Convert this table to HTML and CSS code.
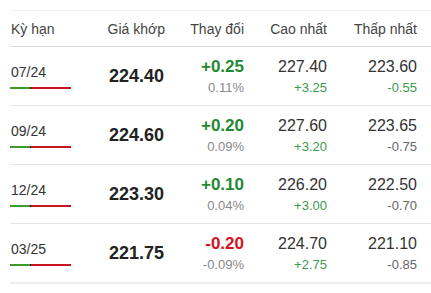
FILE: index.html
```html
<!DOCTYPE html>
<html lang="vi">
<head>
<meta charset="utf-8">
<title>Bảng giá</title>
<link rel="stylesheet" href="styles.css">
</head>
<body>
<div class="wrap">
  <div class="table">
    <div class="row head">
      <div class="c c1">Kỳ hạn</div>
      <div class="c c2">Giá khớp</div>
      <div class="c c3">Thay đổi</div>
      <div class="c c4">Cao nhất</div>
      <div class="c c5">Thấp nhất</div>
    </div>
    <div class="row">
      <div class="c c1"><span class="term">07/24</span><span class="bar"><i class="g" style="width:20px"></i><i class="k"></i><i class="r"></i></span></div>
      <div class="c c2 price">224.40</div>
      <div class="c c3 stack"><span class="big up">+0.25</span><span class="small muted">0.11%</span></div>
      <div class="c c4 stack"><span class="val">227.40</span><span class="small up2">+3.25</span></div>
      <div class="c c5 stack"><span class="val">223.60</span><span class="small up2">-0.55</span></div>
    </div>
    <div class="row">
      <div class="c c1"><span class="term">09/24</span><span class="bar"><i class="g" style="width:20px"></i><i class="k"></i><i class="r"></i></span></div>
      <div class="c c2 price">224.60</div>
      <div class="c c3 stack"><span class="big up">+0.20</span><span class="small muted">0.09%</span></div>
      <div class="c c4 stack"><span class="val">227.60</span><span class="small up2">+3.20</span></div>
      <div class="c c5 stack"><span class="val">223.65</span><span class="small neutral">-0.75</span></div>
    </div>
    <div class="row">
      <div class="c c1"><span class="term">12/24</span><span class="bar"><i class="g" style="width:20px"></i><i class="k"></i><i class="r"></i></span></div>
      <div class="c c2 price">223.30</div>
      <div class="c c3 stack"><span class="big up">+0.10</span><span class="small muted">0.04%</span></div>
      <div class="c c4 stack"><span class="val">226.20</span><span class="small up2">+3.00</span></div>
      <div class="c c5 stack"><span class="val">222.50</span><span class="small neutral">-0.70</span></div>
    </div>
    <div class="row last">
      <div class="c c1"><span class="term">03/25</span><span class="bar"><i class="g" style="width:20px"></i><i class="k"></i><i class="r"></i></span></div>
      <div class="c c2 price">221.75</div>
      <div class="c c3 stack"><span class="big down">-0.20</span><span class="small muted">-0.09%</span></div>
      <div class="c c4 stack"><span class="val">224.70</span><span class="small up2">+2.75</span></div>
      <div class="c c5 stack"><span class="val">221.10</span><span class="small neutral">-0.85</span></div>
    </div>
  </div>
</div>
</body>
</html>
```
FILE: styles.css
```css
html, body {
  margin: 0;
  padding: 0;
  background: #ffffff;
}
body {
  font-family: "Liberation Sans", Arial, sans-serif;
  color: #333;
}
.wrap {
  padding: 10px 0 0 10px;
}
.table {
  border-top: 1px solid #f0f0f0;
}
.row {
  display: grid;
  grid-template-columns: 80px 75px 79px 83px 90px;
  padding-right: 14px;
  height: 58px;
  border-bottom: 1px solid #e6e6e6;
  align-items: center;
}
.row.head {
  height: 35px;
  border-bottom: 1px solid #dcdcdc;
  font-size: 14px;
  color: #444;
}
.row.last {
  border-bottom: 2px solid #eeeeee;
}
.c {
  text-align: right;
  white-space: nowrap;
}
.c1 {
  text-align: left;
  padding-left: 1px;
}
.row:not(.head) .c1 {
  display: flex;
  flex-direction: column;
  align-items: flex-start;
  padding-left: 0;
}
.term {
  font-size: 14px;
  line-height: 16px;
  color: #333;
  padding-left: 1px;
}
.bar {
  display: flex;
  width: 61px;
  height: 2px;
  margin-top: 7px;
}
.bar i {
  display: block;
  height: 2px;
}
.bar .g { background: #3f9a2b; }
.bar .k { width: 1px; background: #1a1a1a; }
.bar .r { flex: 1; background: #c8141e; }
.price {
  font-size: 18px;
  font-weight: bold;
  color: #222;
  padding-right: 1px;
}
.stack {
  display: flex;
  flex-direction: column;
  align-items: flex-end;
}
.big {
  font-size: 17px;
  line-height: 20px;
  font-weight: bold;
}
.val {
  font-size: 16px;
  line-height: 20px;
  color: #333;
}
.small {
  font-size: 13px;
  line-height: 16px;
  margin-top: 3px;
}
.up { color: #1f8a32; }
.down { color: #d3141c; }
.up2 { color: #3c9a4c; }
.muted { color: #8a8a8a; }
.neutral { color: #666; }
```
